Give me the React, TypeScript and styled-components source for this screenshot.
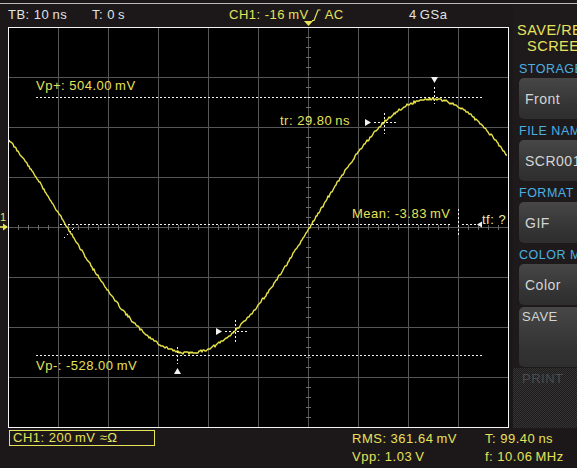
import React from "react";
import styled, { createGlobalStyle } from "styled-components";

const YELLOW = "#e6e25a";
const TRACE = "#e9e54a";
const WHITE = "#e2e2e2";
const BLUE = "#4cb0e2";
const BG = "#1c181a";

const Global = createGlobalStyle`
  html, body { margin: 0; padding: 0; background: ${BG}; }
  body { font-family: "Liberation Sans", Arial, sans-serif; }
`;

const Root = styled.div`
  width: 577px;
  height: 468px;
  overflow: hidden;
  background: ${BG};
  display: flex;
  flex-direction: column;
  font-family: "Liberation Sans", Arial, sans-serif;
  font-size: 13px;
  letter-spacing: 0.5px;
`;

const TopRule = styled.div`
  flex: none;
  height: 3px;
  border-bottom: 1px solid #b9b9b9;
`;

const Middle = styled.div`
  flex: none;
  display: flex;
  height: 424px;
`;

const ScopeColumn = styled.div`
  flex: none;
  width: 513px;
  display: flex;
  flex-direction: column;
`;

const StatusBar = styled.div`
  flex: none;
  height: 23px;
  display: grid;
  grid-template-columns: 84px 137px 180px auto;
  align-items: center;
  padding-left: 8px;
  padding-bottom: 2px;
  box-sizing: border-box;
`;

const StatusItem = styled.span<{ $tone?: "yellow" | "white" }>`
  color: ${(p) => (p.$tone === "yellow" ? YELLOW : WHITE)};
  white-space: nowrap;
  display: inline-flex;
  align-items: center;
`;

const Screen = styled.div`
  position: relative;
  flex: none;
  width: 501px;
  height: 401px;
  margin-left: 8px;
  background: #000;
`;

const Plot = styled.svg`
  display: block;
`;

const Readout = styled.span<{ $x: number; $y: number; $tone?: "pale" }>`
  position: absolute;
  left: ${(p) => p.$x}px;
  top: ${(p) => p.$y}px;
  line-height: 16px;
  color: ${(p) => (p.$tone === "pale" ? "#ece9a8" : YELLOW)};
  white-space: nowrap;
`;

const TriggerMark = styled.svg`
  position: absolute;
  left: 296px;
  top: -6px;
`;

const ChannelMark = styled.div`
  position: absolute;
  left: -8px;
  top: 185px;
  width: 8px;
  height: 19px;
  display: flex;
  flex-direction: column;
  align-items: flex-start;
`;

const ChannelDigit = styled.span`
  color: ${YELLOW};
  font-size: 11px;
  line-height: 11px;
  letter-spacing: 0;
`;

/* right-hand soft-key menu */
const SidePanel = styled.div`
  flex: none;
  width: 64px;
  overflow: hidden;
  display: flex;
  flex-direction: column;
  padding-top: 18px;
  box-sizing: border-box;
  background: #1e1a1c;
`;

const MenuTitle = styled.div<{ $indent: number }>`
  color: ${YELLOW};
  font-size: 14.5px;
  line-height: 16px;
  padding-left: ${(p) => p.$indent}px;
  white-space: nowrap;
`;

const MenuLabel = styled.div`
  height: 21px;
  display: flex;
  align-items: center;
  padding-left: 6px;
  padding-top: 2px;
  box-sizing: border-box;
  color: ${BLUE};
  font-size: 12.5px;
  white-space: nowrap;
`;

const MenuKey = styled.div<{ $tall?: boolean }>`
  flex: none;
  width: 90px;
  height: ${(p) => (p.$tall ? 60 : 41)}px;
  margin-left: 6px;
  margin-top: ${(p) => (p.$tall ? 2 : 0)}px;
  border-radius: 5px;
  background: linear-gradient(#474747, #333 70%, #2e2e2e);
  color: #d4d4d4;
  font-size: ${(p) => (p.$tall ? 13 : 14)}px;
  display: flex;
  align-items: ${(p) => (p.$tall ? "flex-start" : "center")};
  padding: ${(p) => (p.$tall ? "2px 0 0 3px" : "0 0 0 6px")};
  box-sizing: border-box;
  white-space: nowrap;
`;

const DisabledKey = styled.div`
  flex: 1;
  margin-top: 1px;
  padding: 3px 0 0 9px;
  color: #4c4c4c;
  font-size: 13px;
  background: repeating-conic-gradient(#363636 0 25%, #1d1a1c 0 50%) 0 0 / 2px 2px;
`;

const BottomBar = styled.div`
  flex: 1;
  display: grid;
  grid-template-columns: 343px 133px auto;
  grid-template-rows: 18px 18px;
  align-items: center;
  padding: 1px 0 0 9px;
  box-sizing: border-box;
  color: ${YELLOW};
`;

const ChannelBox = styled.div`
  justify-self: start;
  width: 146px;
  height: 16px;
  border: 1px solid ${YELLOW};
  box-sizing: border-box;
  padding-left: 3px;
  line-height: 14px;
  white-space: nowrap;
`;

const Measure = styled.span`
  white-space: nowrap;
`;

const thin = "\u2009";

/* rising-edge trigger slope */
const Slope = () => (
  <svg width="9" height="12" viewBox="0 0 9 12" style={{ margin: "0 4px 0 3px" }}>
    <path d="M0 11.5 H2 L6 1 H8.5" fill="none" stroke={YELLOW} strokeWidth="1.2" />
  </svg>
);

function buildTrace() {
  let seed = 11;
  const rnd = () => {
    seed = (seed * 9301 + 49297) % 233280;
    return seed / 233280;
  };
  const pts: string[] = [];
  for (let x = 1; x <= 499; x += 1) {
    const s = Math.sin(((x - 302) / 486) * 2 * Math.PI);
    const amp = s > 0 ? 128 : 126;
    const y = Math.round(200 - amp * s + (rnd() - 0.5) * 2.2);
    pts.push(`${x},${y}`);
  }
  return pts.join(" ");
}

const tracePoints = buildTrace();

function ticks() {
  const d: string[] = [];
  for (let x = 10; x < 500; x += 10) d.push(`M${x + 0.5} 197.5 V202.5`);
  for (let y = 10; y < 400; y += 10) d.push(`M297.5 ${y + 0.5} H302.5`);
  return d.join(" ");
}

function grid() {
  const d: string[] = [];
  for (let x = 50; x < 500; x += 50) d.push(`M${x + 0.5} 0 V400`);
  for (let y = 50; y < 400; y += 50) d.push(`M0 ${y + 0.5} H500`);
  return d.join(" ");
}

const Graticule = () => (
  <Plot width="501" height="401" viewBox="0 0 501 401">
    <path d={grid()} stroke="#565656" strokeWidth="1" shapeRendering="crispEdges" />
    <path d={ticks()} stroke="#6a6a6a" strokeWidth="1" shapeRendering="crispEdges" />

    {/* cursor lines */}
    <g stroke="#f2f2f2" strokeWidth="1" strokeDasharray="2 2" shapeRendering="crispEdges" fill="none">
      <path d="M28 70.5 H474" />
      <path d="M28 328.5 H474" />
      <path d="M52 197.5 H444" />
      <path d="M426.5 60 V77" />
      <path d="M169.5 320 V337" />
      <path d="M366 95.5 H388" />
      <path d="M376.5 86 V107" />
      <path d="M217 304.5 H240" />
      <path d="M227.5 293 V316" />
      <path d="M450.5 182 V210" />
      <path d="M454 197.5 H468" />
      <path d="M56 211 L66 201" />
    </g>
    <g fill="#f2f2f2">
      <polygon points="423,50 430,50 426.5,56" />
      <polygon points="166,347 173,347 169.5,341" />
      <polygon points="357,92 357,99 363,95.5" />
      <polygon points="208,301 208,308 214,304.5" />
      <polygon points="474,194.5 474,200.5 469,197.5" />
    </g>

    <polyline points={tracePoints} fill="none" stroke={TRACE} strokeWidth="1.4" strokeLinejoin="round" />

    <rect x="0.5" y="0.5" width="500" height="400" fill="none" stroke="#f4f4f4" strokeWidth="1" shapeRendering="crispEdges" />
  </Plot>
);

export default function App() {
  return (
    <Root>
      <Global />
      <TopRule />
      <Middle>
        <ScopeColumn>
          <StatusBar>
            <StatusItem>TB: 10{thin}ns</StatusItem>
            <StatusItem>T: 0{thin}s</StatusItem>
            <StatusItem $tone="yellow">
              CH1: -16{thin}mV
              <Slope />
              AC
            </StatusItem>
            <StatusItem>4{thin}GSa</StatusItem>
          </StatusBar>
          <Screen>
            <Graticule />
            <TriggerMark width="9" height="6" viewBox="0 0 9 6">
              <polygon points="0,0 9,0 4.5,5" fill={YELLOW} />
            </TriggerMark>
            <ChannelMark>
              <ChannelDigit>1</ChannelDigit>
              <svg width="8" height="8" viewBox="0 0 8 8">
                <path d="M0 4 H7" stroke={YELLOW} strokeWidth="1.6" />
                <polygon points="3,0.5 8,4 3,7.5" fill={YELLOW} />
              </svg>
            </ChannelMark>
            <Readout $x={28} $y={51}>Vp+: 504.00{thin}mV</Readout>
            <Readout $x={28} $y={331}>Vp-: -528.00{thin}mV</Readout>
            <Readout $x={272} $y={86}>tr: 29.80{thin}ns</Readout>
            <Readout $x={344} $y={179}>Mean: -3.83{thin}mV</Readout>
            <Readout $x={474} $y={185} $tone="pale">tf: ?</Readout>
          </Screen>
        </ScopeColumn>
        <SidePanel>
          <MenuTitle $indent={4}>SAVE/RECALL</MenuTitle>
          <MenuTitle $indent={14}>SCREENSHOTS</MenuTitle>
          <MenuLabel style={{ marginTop: 3 }}>STORAGE</MenuLabel>
          <MenuKey>Front</MenuKey>
          <MenuLabel>FILE NAME</MenuLabel>
          <MenuKey>SCR001</MenuKey>
          <MenuLabel>FORMAT</MenuLabel>
          <MenuKey>GIF</MenuKey>
          <MenuLabel>COLOR MODE</MenuLabel>
          <MenuKey>Color</MenuKey>
          <MenuKey $tall>SAVE</MenuKey>
          <DisabledKey>PRINT</DisabledKey>
        </SidePanel>
      </Middle>
      <BottomBar>
        <ChannelBox>CH1: 200{thin}mV ≈Ω</ChannelBox>
        <Measure>RMS: 361.64{thin}mV</Measure>
        <Measure>T: 99.40{thin}ns</Measure>
        <span />
        <Measure>Vpp: 1.03{thin}V</Measure>
        <Measure>f: 10.06{thin}MHz</Measure>
      </BottomBar>
    </Root>
  );
}
